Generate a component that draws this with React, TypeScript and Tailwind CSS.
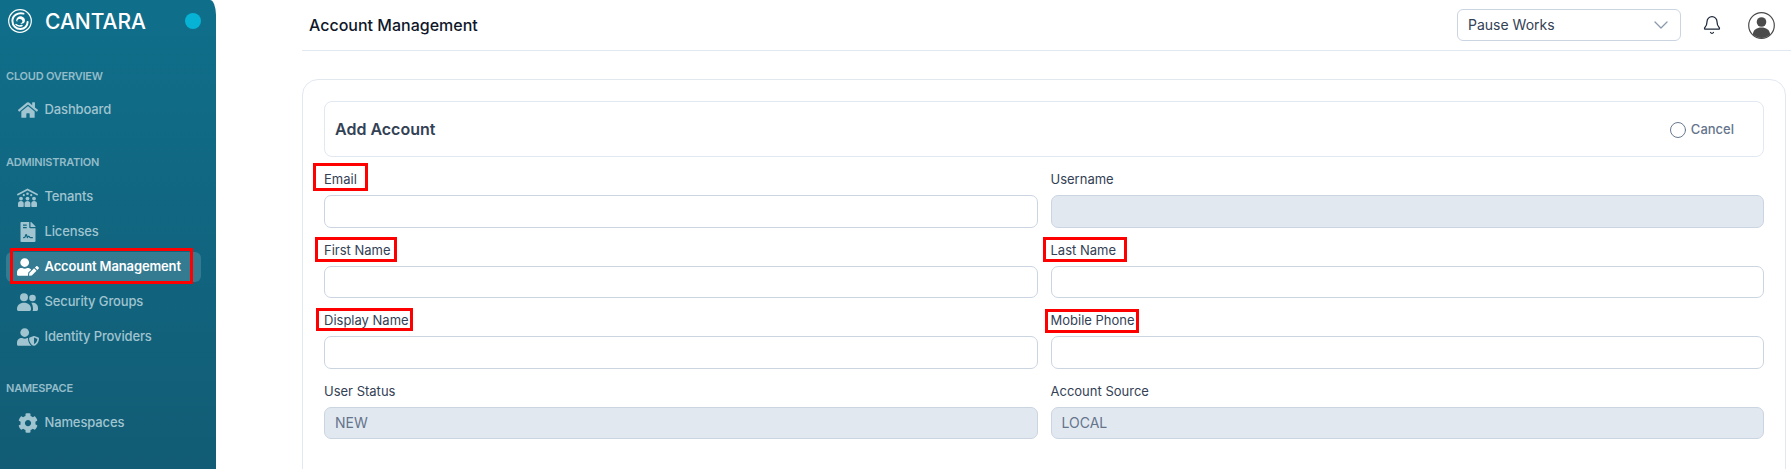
import type { ReactNode } from "react";
import { Bell, ChevronDown, Circle } from "lucide-react";
import { FaFileContract, FaCog, FaHome, FaUserEdit, FaUserShield } from "react-icons/fa";

function Logo() {
  return (
    <svg viewBox="0 0 24 24" className="w-6 h-6 flex-shrink-0" fill="none">
      <circle cx="12" cy="12" r="11.300" stroke="white" strokeWidth="1.200" />
      <path d="M15.500 4.600C10 3 4.400 6.600 4.400 12c0 4.600 3.700 8 8 8 4.200 0 7.200-3.200 7.200-7" stroke="white" strokeWidth="2" strokeLinecap="round" />
      <path d="M8.200 11.500c0-3 3-4.800 5.600-4 2.800.8 3.800 3.600 2.800 5.600-.8 1.700-3 2.200-4.400 1.200 1.600-.2 2.400-1.200 2.200-2.400-.3-1.500-2-2.300-3.400-1.800-1.200.4-1.900 1.500-1.700 2.800-.4-.4-1.100-1-1.100-1.400Z" fill="white" />
      <path d="M8 15.500c1.600 1.400 4 1.900 6 1" stroke="white" strokeWidth="1.500" strokeLinecap="round" />
    </svg>
  );
}

function TenantsIcon() {
  return (
    <svg viewBox="0 0 21 19" className="w-[21px] h-[19px]" fill="currentColor">
      <path d="M1 6.500 10.500 1.500 20 6.500" fill="none" stroke="currentColor" strokeWidth="1.800" strokeLinecap="round" strokeLinejoin="round" />
      <circle cx="10.500" cy="5.800" r="1.300" />
      <circle cx="6.800" cy="7.200" r="1.100" />
      <circle cx="14.200" cy="7.200" r="1.100" />
      <circle cx="4" cy="10.600" r="1.900" />
      <circle cx="10.500" cy="10.600" r="1.900" />
      <circle cx="17" cy="10.600" r="1.900" />
      <path d="M1 18v-2.500c0-1.400 1.200-2.500 3-2.500s2.700 1.100 2.700 2.500V18c0 .6-.4 1-1 1H2c-.6 0-1-.4-1-1Z" />
      <path d="M7.600 18v-2.500c0-1.400 1.200-2.500 2.900-2.500s2.900 1.100 2.900 2.500V18c0 .6-.4 1-1 1H8.600c-.6 0-1-.4-1-1Z" />
      <path d="M14.300 18v-2.500c0-1.400.9-2.500 2.700-2.500s3 1.100 3 2.500V18c0 .6-.4 1-1 1h-3.700c-.6 0-1-.4-1-1Z" />
    </svg>
  );
}

function GroupIcon() {
  return (
    <svg viewBox="0 0 21 18" className="w-[21px] h-[18px]" fill="currentColor">
      <circle cx="7" cy="4.200" r="4" />
      <circle cx="15.500" cy="5" r="3.300" />
      <path d="M0 16c0-3.800 2.800-6.200 7-6.200s7 2.400 7 6.200v.6c0 .8-.6 1.400-1.400 1.400H1.400C.6 18 0 17.400 0 16.600V16Z" />
      <path d="M14.300 9.800c.4-.1.800-.1 1.200-.1 3.300 0 5.500 2 5.500 5.200v1.700c0 .8-.6 1.400-1.400 1.400h-4.100c.4-.4.500-.9.500-1.400V16c0-2.500-.6-4.500-1.700-6.200Z" />
    </svg>
  );
}

function SectionLabel({ children, className }: { children: ReactNode; className: string }) {
  return <div className={`text-[11px] leading-4 font-semibold tracking-[-0.02em] text-[#94bcc9] pl-1.5 ${className}`}>{children}</div>;
}

function NavItem({ icon, label, active }: { icon: ReactNode; label: string; active?: boolean }) {
  return (
    <div
      className={`relative h-[30px] mb-[5px] ml-1.5 mr-[15px] rounded-md flex items-center text-[13px] tracking-[-0.01em] ${
        active ? "bg-white/15 text-white font-semibold" : "text-[#a0c4d0] font-medium"
      }`}
    >
      <span className="w-[38.500px] flex justify-center pl-[9px] pr-[4px] flex-shrink-0">{icon}</span>
      <span className="whitespace-nowrap">{label}</span>
      {active && <span className="absolute left-[4px] -top-[4px] w-[183px] h-[36px] border-[3px] border-[#ff0000]" />}
    </div>
  );
}

function Sidebar() {
  return (
    <aside className="w-[216px] flex-shrink-0 h-full rounded-tr-[6px_15px] bg-gradient-to-b from-[#0f6f8b] to-[#125c75]">
      <div className="flex items-center h-[42px] pl-2 pr-[15px]">
        <Logo />
        <span className="ml-[13px] text-[21px] leading-none font-medium text-white">CANTARA</span>
        <span className="ml-auto w-4 h-4 rounded-full bg-[#07b3d5]" />
      </div>
      <SectionLabel className="mt-[26px] mb-[11px]">CLOUD OVERVIEW</SectionLabel>
      <NavItem icon={<FaHome size={20} />} label="Dashboard" />
      <SectionLabel className="mt-[29px] mb-[12px]">ADMINISTRATION</SectionLabel>
      <NavItem icon={<TenantsIcon />} label="Tenants" />
      <NavItem icon={<FaFileContract size={20} />} label="Licenses" />
      <NavItem icon={<FaUserEdit size={22} />} label="Account Management" active />
      <NavItem icon={<GroupIcon />} label="Security Groups" />
      <NavItem icon={<FaUserShield size={22} />} label="Identity Providers" />
      <SectionLabel className="mt-[28px] mb-[12px]">NAMESPACE</SectionLabel>
      <NavItem icon={<FaCog size={20} />} label="Namespaces" />
    </aside>
  );
}

function Avatar() {
  return (
    <svg viewBox="0 0 27 27" className="w-[27px] h-[27px]" fill="none">
      <circle cx="13.500" cy="13.500" r="12.800" fill="white" stroke="#4b4b4b" strokeWidth="1.200" />
      <circle cx="13.500" cy="10" r="4.800" fill="#4b4b4b" />
      <path d="M4.800 22.500c.6-5 4-7 8.700-7s8.100 2 8.700 7a12.800 12.800 0 0 1-17.400 0Z" fill="#4b4b4b" />
    </svg>
  );
}

function Field({ label, value, box }: { label: string; value?: string; box?: string }) {
  return (
    <div>
      <label className="relative block h-[16px] text-[13px] leading-4 text-[#334155]">
        {label}
        {box && <span className={`absolute border-[3px] border-[#ff0000] ${box}`} />}
      </label>
      <input
        readOnly
        value={value ?? ""}
        className={`block w-full mt-[8px] h-[32.500px] px-[10px] rounded-[7px] border border-[#cbd5e1] text-sm outline-none ${
          value ? "bg-[#e2e8f0] text-[#64748b]" : "bg-white"
        }`}
      />
    </div>
  );
}

export default function App() {
  return (
    <div className="flex w-[1791px] h-[469px] overflow-hidden bg-white font-['Inter',sans-serif]">
      <Sidebar />
      <main className="flex-1 min-w-0 pl-[86px]">
        <header className="h-[51px] border-b border-[#e2e8f0] flex items-center pl-[7px] pr-4">
          <h1 className="text-base font-medium text-[#0f172a]">Account Management</h1>
          <div className="ml-auto w-[224px] h-[32px] rounded-md border border-[#cbd5e1] flex items-center justify-between pl-[10px] pr-[7px] text-sm text-[#334155]">
            Pause Works
            <ChevronDown className="w-6 h-6 text-[#8a99ad]" strokeWidth={1.300} />
          </div>
          <Bell className="ml-[21px] w-5 h-5 text-[#1e293b]" strokeWidth={1.500} />
          <div className="ml-[26px]"><Avatar /></div>
        </header>

        <section className="mt-[28px] mr-[5px] rounded-t-[16px] border border-[#e2e8f0] pt-[21px] pl-[21px] pr-[21px] h-[500px]">
          <div className="h-[56px] rounded-lg border border-[#e2e8f0] flex items-center justify-between pl-[10px] pr-[29px]">
            <h2 className="text-base font-semibold text-[#334155]">Add Account</h2>
            <button className="flex items-center gap-[4px] pt-px text-[13px] font-medium text-[#64748b]">
              <Circle className="w-[18px] h-[18px]" strokeWidth={1.300} />
              Cancel
            </button>
          </div>

          <div className="grid grid-cols-2 gap-x-[13px] gap-y-[14px] mt-[14px]">
            <Field label="Email" box="-left-[11px] -top-[8px] w-[55px] h-[28px]" />
            <Field label="Username" value=" " />
            <Field label="First Name" box="-left-[9px] -top-[4.500px] w-[82px] h-[25px]" />
            <Field label="Last Name" box="-left-[8px] -top-[4.500px] w-[84px] h-[25px]" />
            <Field label="Display Name" box="-left-[8px] -top-[4px] w-[97px] h-[23px]" />
            <Field label="Mobile Phone" box="-left-[6px] -top-[3.500px] w-[94px] h-[24.500px]" />
            <Field label="User Status" value="NEW" />
            <Field label="Account Source" value="LOCAL" />
          </div>
        </section>
      </main>
    </div>
  );
}
